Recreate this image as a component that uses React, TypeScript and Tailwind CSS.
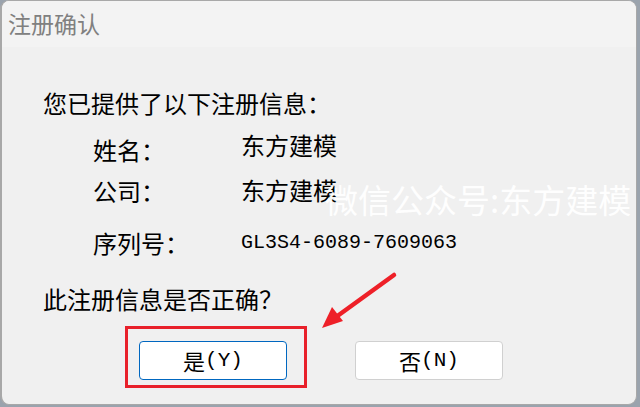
import { type FC } from 'react';

const cjk = { fontFamily: '"Noto Sans CJK SC", "Noto Sans", sans-serif' };
const mono = { fontFamily: '"Liberation Mono", "Noto Sans CJK SC", monospace' };

const rows = [
  { label: '姓名：', value: '东方建模', lift: true },
  { label: '公司：', value: '东方建模', lift: false },
  { label: '序列号：', value: 'GL3S4-6089-7609063', lift: false, latin: true },
];

const App: FC = () => {
  return (
    <div className="w-[640px] h-[407px] bg-[#9aa3ad] overflow-hidden" style={cjk}>
      <div className="relative w-[637px] h-[405px] rounded-[9px] border border-[#a8a8a8] border-l-2 overflow-hidden bg-[#f0f0f0]">
        {/* title bar */}
        <div className="h-[46px] bg-[#f3f3f3] flex items-center pl-[6px] pb-[2px]">
          <span className="text-[23px] leading-none text-[#808080]">注册确认</span>
        </div>

        {/* body */}
        <div className="pl-[41px] pt-[41px] text-[24px] text-black">
          <div className="h-[30px] leading-[30px]">您已提供了以下注册信息：</div>

          <div className="pl-[50px] mt-[17px] flex flex-col">
            {rows.map((r, i) => (
              <div
                key={r.label}
                className={
                  'h-[30px] flex items-center ' + (i === 1 ? 'mt-[11px]' : i === 2 ? 'mt-[22px]' : '')
                }
              >
                <span className="w-[148px] leading-[30px]">{r.label}</span>
                {r.latin ? (
                  <span className="text-[20px] leading-[30px]" style={mono}>
                    {r.value}
                  </span>
                ) : (
                  <span className={'leading-[30px] ' + (r.lift ? 'mb-[10px]' : 'mb-[3px]')}>{r.value}</span>
                )}
              </div>
            ))}
          </div>

          <div className="h-[30px] leading-[30px] mt-[26px]">此注册信息是否正确？</div>

          <div className="mt-[27px] pl-[96px] flex gap-[68px]">
            <button className="w-[148px] h-[39px] bg-white border-[1.5px] border-[#0067c0] rounded-[4px] text-[22px] flex items-center justify-center">
              是<span style={mono} className="text-[21px]">(Y)</span>
            </button>
            <button className="w-[148px] h-[39px] bg-white border border-[#d0d0d0] rounded-[4px] text-[22px] flex items-center justify-center">
              否<span style={mono} className="text-[21px]">(N)</span>
            </button>
          </div>
        </div>

        {/* watermark */}
        <div className="absolute left-[323px] top-[176px] text-[33px] leading-[44px] text-white/95 whitespace-nowrap">
          微信公众号:东方建模
        </div>

        {/* red annotation box */}
        <div className="absolute left-[123px] top-[325px] w-[182px] h-[62px] border-[3px] border-[#e8202a]" />

        {/* red arrow */}
        <svg className="absolute left-0 top-0" width="640" height="407">
          <line x1="392" y1="274" x2="334" y2="316" stroke="#ee2028" strokeWidth="4.5" strokeLinecap="round" />
          <polygon points="320,327 330,306 341,320" fill="#ee2028" />
        </svg>
      </div>
    </div>
  );
};

export default App;
